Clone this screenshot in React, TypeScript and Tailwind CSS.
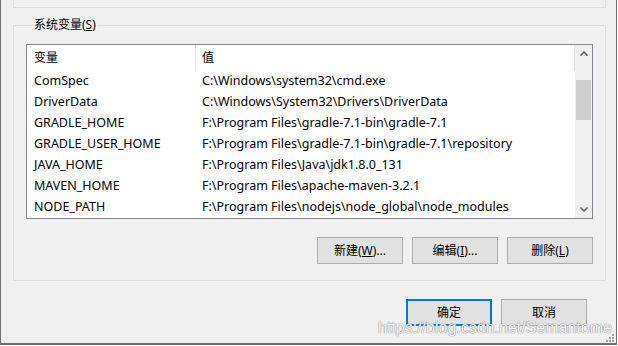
import React from "react";

const rows: [string, string][] = [
  ["ComSpec", "C:\\Windows\\system32\\cmd.exe"],
  ["DriverData", "C:\\Windows\\System32\\Drivers\\DriverData"],
  ["GRADLE_HOME", "F:\\Program Files\\gradle-7.1-bin\\gradle-7.1"],
  ["GRADLE_USER_HOME", "F:\\Program Files\\gradle-7.1-bin\\gradle-7.1\\repository"],
  ["JAVA_HOME", "F:\\Program Files\\Java\\jdk1.8.0_131"],
  ["MAVEN_HOME", "F:\\Program Files\\apache-maven-3.2.1"],
  ["NODE_PATH", "F:\\Program Files\\nodejs\\node_global\\node_modules"],
];

function Btn({ children, primary }: { children: React.ReactNode; primary?: boolean }) {
  return (
    <button
      className={
        primary
          ? "w-[86px] h-[27px] bg-[#e1e1e1] border-2 border-[#0078d7] flex items-center justify-center text-[12px] text-black"
          : "w-[86px] h-[27px] bg-[#e1e1e1] border border-[#adadad] flex items-center justify-center text-[12px] text-black"
      }
    >
      {children}
    </button>
  );
}

export default function App() {
  return (
    <div className="relative w-[618px] h-[346px] bg-white font-['Noto_Sans','Noto_Sans_CJK_SC',sans-serif] text-[12px] text-black overflow-hidden">
      <div className="w-[617px] h-[345px] bg-[#f0f0f0] border-l border-r border-b-2 border-[#707070] flex flex-col">
        <div className="ml-[12px] w-[593px] h-[8px] border-x border-b border-[#dcdcdc]" />
        <fieldset className="ml-[12px] mt-[9px] w-[593px] border border-[#dcdcdc] px-[12px] pb-[16px]">
          <legend className="ml-[7px] px-[1px] leading-[16px]">
            系统变量(<span className="underline">S</span>)
          </legend>
          <div className="mt-[11px] w-[567px] h-[175px] border border-[#828790] bg-white flex">
            <div className="w-[548px] flex flex-col">
              <div className="h-[26px] flex items-center">
                <div className="w-[169px] h-full flex items-center pl-[7px] border-r border-[#e5e5e5]">变量</div>
                <div className="flex-1 h-full flex items-center pl-[6px] border-r border-[#e5e5e5]">值</div>
              </div>
              {rows.map(([k, v]) => (
                <div key={k} className="h-[21px] shrink-0 flex items-center whitespace-nowrap text-[12.5px]">
                  <div className="w-[169px] pl-[7px]">{k}</div>
                  <div className="pl-[6px]">{v}</div>
                </div>
              ))}
            </div>
            <div className="w-[17px] bg-[#f0f0f0] flex flex-col">
              <div className="h-[17px] flex items-center justify-center">
                <svg width="8" height="5" viewBox="0 0 8 5">
                  <polyline points="0.5,4.5 4,1 7.5,4.5" fill="none" stroke="#606060" strokeWidth="1.5" />
                </svg>
              </div>
              <div className="flex-1">
                <div className="mt-[18px] mx-[1px] h-[40px] bg-[#cdcdcd]" />
              </div>
              <div className="h-[17px] flex items-center justify-center">
                <svg width="8" height="5" viewBox="0 0 8 5">
                  <polyline points="0.5,0.5 4,4 7.5,0.5" fill="none" stroke="#606060" strokeWidth="1.5" />
                </svg>
              </div>
            </div>
          </div>
          <div className="mt-[18px] flex justify-end gap-[9px]">
            <Btn>
              新建(<span className="underline">W</span>)...
            </Btn>
            <Btn>
              编辑(<span className="underline">I</span>)...
            </Btn>
            <Btn>
              删除(<span className="underline">L</span>)
            </Btn>
          </div>
        </fieldset>
        <div className="mt-[18px] pr-[29px] flex justify-end gap-[9px]">
          <Btn primary>确定</Btn>
          <Btn>取消</Btn>
        </div>
      </div>
      <div className="absolute left-[378px] top-[316px] text-[16px] font-['Liberation_Sans',sans-serif] text-[rgba(255,255,255,0.9)] [text-shadow:0_0_1px_#8a8a8a,0_0_1px_#8a8a8a] whitespace-nowrap pointer-events-none">
        https://blog.csdn.net/Semantome
      </div>
      <svg className="absolute left-[606px] top-[334px]" width="9" height="9" viewBox="0 0 9 9">
        <rect x="6" y="0" width="2" height="2" fill="#a0a0a0" />
        <rect x="3" y="3" width="2" height="2" fill="#a0a0a0" />
        <rect x="6" y="3" width="2" height="2" fill="#a0a0a0" />
        <rect x="0" y="6" width="2" height="2" fill="#a0a0a0" />
        <rect x="3" y="6" width="2" height="2" fill="#a0a0a0" />
        <rect x="6" y="6" width="2" height="2" fill="#a0a0a0" />
      </svg>
    </div>
  );
}
